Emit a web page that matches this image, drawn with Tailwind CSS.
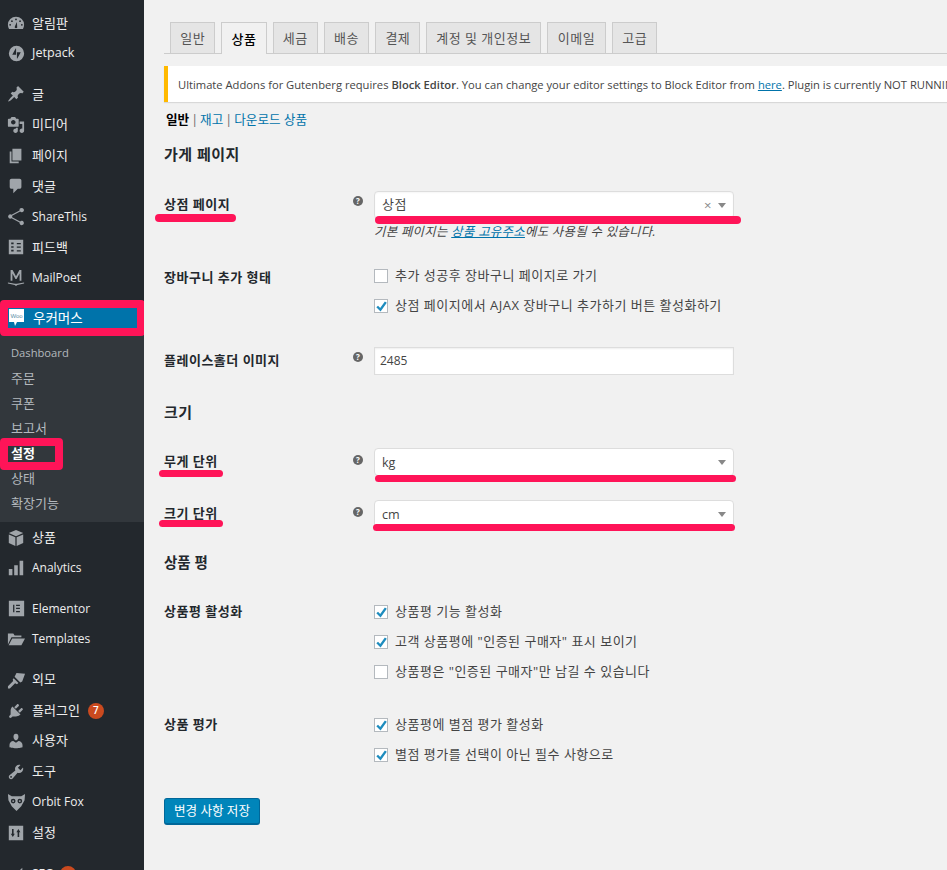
<!DOCTYPE html>
<html lang="ko">

<head>
    <meta charset="UTF-8">
    <title>설정 - 상품</title>
    <script src="https://cdn.jsdelivr.net/npm/@tailwindcss/browser@4"></script>
</head>

<body class="bg-[#f1f1f1] h-[870px] w-[947px] overflow-hidden flex text-[13px] text-[#444] font-['Open_Sans','Noto_Sans_CJK_KR',sans-serif]">

    <!-- sidebar -->
    <aside class="w-[144px] h-[870px] shrink-0 bg-[#23282d] pt-[8px] text-[#eee] overflow-hidden">
        <a class="flex items-center h-[30.6px]"><span class="w-[32px] flex justify-center"><svg class="w-[18px] h-[18px] fill-[#a0a5aa]" viewBox="0 0 20 20"><path d="M10 3a9 9 0 0 0-9 9c0 1.700.5 3.300 1.300 4.600h15.400A9 9 0 0 0 19 12a9 9 0 0 0-9-9zM10 5a1 1 0 1 1 0 2 1 1 0 0 1 0-2zM5.500 7a1 1 0 1 1 0 2 1 1 0 0 1 0-2zM14.500 7a1 1 0 1 1 0 2 1 1 0 0 1 0-2zM3.500 11a1 1 0 1 1 0 2 1 1 0 0 1 0-2zM16.500 11a1 1 0 1 1 0 2 1 1 0 0 1 0-2zM11 9l.3 5a1.400 1.400 0 1 1-2.600 0z"/></svg></span>알림판</a>
        <a class="flex items-center h-[30.6px] text-[12.6px]"><span class="w-[32px] flex justify-center"><svg class="w-[17px] h-[17px] fill-[#a0a5aa]" viewBox="0 0 20 20"><path fill-rule="evenodd" d="M10 1a9 9 0 1 1 0 18 9 9 0 0 1 0-18zM9.500 4H9L5 11.500h4.500zM10.500 16H11l4-7.500h-4.500z"/></svg></span>Jetpack</a>
        <div class="h-[10px]"></div>
        <a class="flex items-center h-[30.6px]"><span class="w-[32px] flex justify-center"><svg class="w-[18px] h-[18px] fill-[#a0a5aa]" viewBox="0 0 20 20"><path d="M10.440 3.020l1.820-1.820 6.360 6.350-1.830 1.820c-1.050-.68-2.480-.57-3.410.36l-.75.75c-.92.93-1.040 2.350-.35 3.410l-1.830 1.820-2.410-2.410-2.800 2.790c-.42.42-3.380 2.710-3.800 2.290s1.860-3.390 2.280-3.810l2.790-2.790L4.100 9.360l1.830-1.820c1.050.69 2.480.57 3.400-.36l.75-.75c.93-.92 1.050-2.350.36-3.410z"/></svg></span>글</a>
        <a class="flex items-center h-[30.6px]"><span class="w-[32px] flex justify-center"><svg class="w-[18px] h-[18px] fill-[#a0a5aa]" viewBox="0 0 20 20"><path d="M13 11V4c0-.55-.45-1-1-1h-1.670L9 1H5L3.670 3H2c-.55 0-1 .45-1 1v7c0 .55.45 1 1 1h10c.55 0 1-.45 1-1zM7 4.500c1.380 0 2.500 1.120 2.500 2.500S8.380 9.500 7 9.500 4.500 8.380 4.500 7 5.620 4.500 7 4.500zM14 6h5v10.500c0 1.380-1.120 2.500-2.500 2.500S14 17.880 14 16.500s1.120-2.500 2.500-2.500c.17 0 .34.020.5.050V9h-3V6zm-4 8.050V13h2v3.500c0 1.380-1.120 2.500-2.500 2.500S7 17.880 7 16.500 8.120 14 9.500 14c.17 0 .34.020.5.050z"/></svg></span>미디어</a>
        <a class="flex items-center h-[30.6px]"><span class="w-[32px] flex justify-center"><svg class="w-[18px] h-[18px] fill-[#a0a5aa]" viewBox="0 0 20 20"><path d="M6 15V2h10v13H6zm-1 1h8v2H3V5h2v11z"/></svg></span>페이지</a>
        <a class="flex items-center h-[30.6px]"><span class="w-[32px] flex justify-center"><svg class="w-[18px] h-[18px] fill-[#a0a5aa]" viewBox="0 0 20 20"><path d="M5 2h9c1.100 0 2 .9 2 2v7c0 1.100-.9 2-2 2h-2l-5 5v-5H5c-1.100 0-2-.9-2-2V4c0-1.100.9-2 2-2z"/></svg></span>댓글</a>
        <a class="flex items-center h-[30.6px] text-[12px]"><span class="w-[32px] flex justify-center"><svg class="w-[19px] h-[19px] fill-[#a0a5aa]" viewBox="0 0 20 20"><path d="M15.500 1a2.300 2.300 0 1 1-1.700 3.800L5.400 9.300a2.300 2.300 0 0 1 0 1.400l8.400 4.500a2.300 2.300 0 1 1-.6 1.200l-8.400-4.500a2.300 2.300 0 1 1 0-3.800l8.400-4.500A2.300 2.300 0 0 1 15.500 1z"/></svg></span>ShareThis</a>
        <a class="flex items-center h-[30.6px]"><span class="w-[32px] flex justify-center"><svg class="w-[16px] h-[16px] fill-[#a0a5aa]" viewBox="0 0 20 20"><path fill-rule="evenodd" d="M1 1h18v18H1zM4 4.500v2h3v-2zM11 5v1.500h5V5zM4 9v2h3V9zM11 9.500V11h5V9.500zM4 13.500v2h3v-2zM11 14v1.500h5V14z"/></svg></span>피드백</a>
        <a class="flex items-center h-[30.6px] text-[12px]"><span class="w-[32px] flex justify-center"><svg class="w-[18px] h-[18px] fill-[#a0a5aa]" viewBox="0 0 20 20"><path d="M4 1h2.200L10 8l3.800-7H16v12h-2V5l-3.400 6H9.400L6 5v8H4zM1 15l8 1.400c.7.100 1.300.100 2 0l8-1.400v1l-7.500 1.800L10 19l-1.500-1.200L1 16z"/></svg></span>MailPoet</a>
        <div class="h-[10px]"></div>

        <!-- woocommerce, boxed in pink -->
        <div class="border-[8px] border-[#ff1458] rounded-[4px] w-[145px] h-[36px] bg-[#0073aa] text-white flex items-center text-[13.5px] leading-none relative -mt-[3px] -mb-[1px]">
            <svg class="absolute left-[0px] top-[0px] w-[17px] h-[20px]" viewBox="0 0 17 20"><path d="M1 1h15v13H9l-2 4-1-4H1z" fill="#fff"/><text x="8.500" y="10" text-anchor="middle" font-size="6" fill="#5b8fa8" font-family="Liberation Sans">Woo</text></svg>
            <span class="ml-[25px]">우커머스</span>
        </div>
        <div class="bg-[#32373c] h-[187px] pt-[6px] text-[#b4b9be] text-[13px]">
            <a class="flex items-center h-[25px] pl-[11px] text-[11.2px]">Dashboard</a>
            <a class="flex items-center h-[25px] pl-[11px]">주문</a>
            <a class="flex items-center h-[25px] pl-[11px]">쿠폰</a>
            <a class="flex items-center h-[25px] pl-[11px]">보고서</a>
            <a class="flex items-center h-[25px] pl-[11px] relative text-white font-bold z-10"><span class="absolute left-0 top-[-3px] w-[63px] h-[32px] border-[8px] border-[#ff1458] rounded-[4px] -z-10"></span>설정</a>
            <a class="flex items-center h-[25px] pl-[11px]">상태</a>
            <a class="flex items-center h-[25px] pl-[11px]">확장기능</a>
        </div>

        <a class="flex items-center h-[30.6px]"><span class="w-[32px] flex justify-center"><svg class="w-[18px] h-[18px] fill-[#a0a5aa]" viewBox="0 0 20 20"><path d="M10 1l8 3.500-8 3.500-8-3.500zM2 6l7.300 3.200V19L2 15.500zM18 6v9.500L10.700 19V9.200z"/></svg></span>상품</a>
        <a class="flex items-center h-[30.6px] text-[12px]"><span class="w-[32px] flex justify-center"><svg class="w-[18px] h-[18px] fill-[#a0a5aa]" viewBox="0 0 20 20"><path d="M2 11h4v7H2zM8 7h4v11H8zM14 2h4v16h-4z"/></svg></span>Analytics</a>
        <div class="h-[10px]"></div>
        <a class="flex items-center h-[30.6px] text-[12px]"><span class="w-[32px] flex justify-center"><svg class="w-[17px] h-[17px] fill-[#a0a5aa]" viewBox="0 0 20 20"><path fill-rule="evenodd" d="M1 1h18v18H1zM6 5.500v9h1.500v-9zM9.500 5.500V7H14V5.500zM9.500 9.200v1.500H14V9.200zM9.500 13v1.500H14V13z"/></svg></span>Elementor</a>
        <a class="flex items-center h-[30.6px] text-[12px]"><span class="w-[32px] flex justify-center"><svg class="w-[18px] h-[18px] fill-[#a0a5aa]" viewBox="0 0 20 20"><path d="M1 4h6l1.500 2H16v2H5L1 16zM5.800 9.500H20L16 17H1.800z"/></svg></span>Templates</a>
        <div class="h-[10px]"></div>
        <a class="flex items-center h-[30.6px]"><span class="w-[32px] flex justify-center"><svg class="w-[19px] h-[19px] fill-[#a0a5aa]" viewBox="0 0 20 20"><path d="M10 2l9 1-3 8-2 1-6-6zM7 7.500l5 5-1.500 1.500-2-1-5.500 5.500H1v-2.500L6.500 10.500 6 9z"/></svg></span>외모</a>
        <a class="flex items-center h-[30.6px]"><span class="w-[32px] flex justify-center"><svg class="w-[18px] h-[18px] fill-[#a0a5aa]" viewBox="0 0 20 20"><path d="M13.110 4.360L9.870 7.600 8 5.730l3.240-3.240c.35-.34 1.050-.2 1.560.32.52.51.66 1.210.31 1.550zm-8 1.770l.91-1.120 9.010 9.010-1.190.84c-.71.71-2.630 1.160-3.820 1.160H6.140L4.900 17.260c-.59.59-1.540.59-2.120 0-.59-.58-.59-1.530 0-2.120l1.240-1.240v-3.880c0-1.130.4-3.190 1.090-3.890zm7.260 3.970l3.240-3.240c.34-.35 1.040-.21 1.550.31.52.51.66 1.210.31 1.550l-3.240 3.250z"/></svg></span><span>플러그인</span><span class="ml-[8px] w-[16px] h-[16px] rounded-full bg-[#ca4a1f] text-white text-[10px] font-semibold flex items-center justify-center">7</span></a>
        <a class="flex items-center h-[30.6px]"><span class="w-[32px] flex justify-center"><svg class="w-[18px] h-[18px] fill-[#a0a5aa]" viewBox="0 0 20 20"><path d="M10 9.250c-2.270 0-2.730-3.440-2.730-3.440C7 4.020 7.820 2 9.970 2c2.160 0 2.980 2.020 2.710 3.810 0 0-.41 3.440-2.680 3.440zm0 2.570L12.720 10c2.390 0 4.520 2.330 4.520 4.530v2.490s-3.650 1.130-7.240 1.130c-3.650 0-7.240-1.130-7.240-1.130v-2.490c0-2.250 1.940-4.480 4.150-4.480z"/></svg></span>사용자</a>
        <a class="flex items-center h-[30.6px]"><span class="w-[32px] flex justify-center"><svg class="w-[18px] h-[18px] fill-[#a0a5aa]" viewBox="0 0 20 20"><path d="M16.680 9.770c-1.340 1.340-3.300 1.670-4.950.99l-5.410 6.520c-.99.99-2.590.99-3.580 0s-.99-2.590 0-3.570l6.520-5.420c-.68-1.650-.35-3.610.99-4.950 1.280-1.280 3.120-1.620 4.720-1.060l-2.890 2.890 2.820 2.820 2.860-2.870c.53 1.580.18 3.400-1.080 4.670zM3.810 16.210c.4.39 1.030.39 1.420 0 .4-.4.4-1.030 0-1.430-.39-.39-1.020-.39-1.420 0-.39.4-.39 1.030 0 1.430z"/></svg></span>도구</a>
        <a class="flex items-center h-[30.6px] text-[12px]"><span class="w-[32px] flex justify-center"><svg class="w-[19px] h-[19px] fill-[#a0a5aa]" viewBox="0 0 20 20"><path fill-rule="evenodd" d="M1 1l4 2.500h10L19 1l-.5 6.500L15 14l-5 5-5-5-3.500-6.500zM6.500 6a2.500 2.500 0 1 0 0 5 2.500 2.500 0 0 0 0-5zM13.500 6a2.500 2.500 0 1 0 0 5 2.500 2.500 0 0 0 0-5zM6.500 7.500a1 1 0 1 1 0 2 1 1 0 0 1 0-2zM13.500 7.500a1 1 0 1 1 0 2 1 1 0 0 1 0-2z"/></svg></span>Orbit Fox</a>
        <a class="flex items-center h-[30.6px]"><span class="w-[32px] flex justify-center"><svg class="w-[16px] h-[16px] fill-[#a0a5aa]" viewBox="0 0 20 20"><path fill-rule="evenodd" d="M1 1h18v18H1zM5 5v6H3.500L6 15l2.500-4H7V5zM14 15V9h1.500L13 5l-2.500 4H12v6z"/></svg></span>설정</a>
        <div class="h-[10px]"></div>
        <a class="flex items-center h-[30.6px] text-[12px]"><span class="w-[32px] flex justify-center"><svg class="w-[18px] h-[18px] fill-[#a0a5aa]" viewBox="0 0 20 20"><path d="M2 6h9v10H2zM12 8l5-5v10z"/></svg></span><span>SEO</span><span class="ml-[5px] w-[16px] h-[16px] rounded-full bg-[#ca4a1f]"></span></a>
    </aside>

    <!-- main content -->
    <main class="flex-1 min-w-0 pl-[20px] pt-[22px] tracking-[0.5px]">
        <div class="flex gap-[6px] pl-[6px] h-[32px] border-b border-[#ccc] whitespace-nowrap">
            <a class="w-[45.3px] h-[31px] pt-[2px] flex items-center justify-center bg-[#e5e5e5] border border-[#ccc] border-b-0 text-[#555]">일반</a>
            <a class="w-[45.3px] h-[32px] pt-[2px] flex items-center justify-center bg-[#f1f1f1] border border-[#ccc] border-b-0 text-black font-medium">상품</a>
            <a class="w-[45.3px] h-[31px] pt-[2px] flex items-center justify-center bg-[#e5e5e5] border border-[#ccc] border-b-0 text-[#555]">세금</a>
            <a class="w-[45.3px] h-[31px] pt-[2px] flex items-center justify-center bg-[#e5e5e5] border border-[#ccc] border-b-0 text-[#555]">배송</a>
            <a class="w-[45.3px] h-[31px] pt-[2px] flex items-center justify-center bg-[#e5e5e5] border border-[#ccc] border-b-0 text-[#555]">결제</a>
            <a class="w-[114.5px] h-[31px] pt-[2px] flex items-center justify-center bg-[#e5e5e5] border border-[#ccc] border-b-0 text-[#555]">계정 및 개인정보</a>
            <a class="w-[59px] h-[31px] pt-[2px] flex items-center justify-center bg-[#e5e5e5] border border-[#ccc] border-b-0 text-[#555]">이메일</a>
            <a class="w-[45.3px] h-[31px] pt-[2px] flex items-center justify-center bg-[#e5e5e5] border border-[#ccc] border-b-0 text-[#555]">고급</a>
        </div>

        <div class="mt-[12px] h-[36px] bg-white border-l-[4px] border-[#ffb900] shadow-[0_1px_1px_rgba(0,0,0,0.1)] flex items-center pl-[10px] pt-[2px] whitespace-nowrap overflow-hidden text-[11.2px] tracking-normal">
            <p>Ultimate Addons for Gutenberg requires <b class="font-semibold">Block Editor</b>. You can change your editor settings to Block Editor from <a class="underline text-[#0073aa]">here</a>. Plugin is currently NOT RUNNING.</p>
        </div>

        <div class="mt-[9px] h-[18px] flex items-center text-[#666] pl-[2px] text-[12.6px] tracking-normal"><b class="font-semibold text-black">일반</b><span class="mx-[2px]">|</span><a class="text-[#0073aa]">재고</a><span class="mx-[2px]">|</span><a class="text-[#0073aa]">다운로드 상품</a></div>

        <h2 class="mt-[15px] h-[20px] flex items-center text-[15px] font-semibold text-[#23282d]">가게 페이지</h2>

        <div class="mt-[27px] flex">
            <div class="w-[189px] pt-[4px] font-semibold text-[#23282d] relative">상점 페이지<span class="absolute left-[-9px] top-[23px] w-[81px] h-[8px] rounded-full bg-[#ff1458]"></span></div>
            <div class="w-[21px] pt-[5px]"><span class="block w-[10px] h-[10px] rounded-full bg-[#666] text-white text-[8px] leading-[10px] font-bold text-center tracking-normal">?</span></div>
            <div class="w-[360px]">
                <div class="relative h-[28px] bg-white border border-[#ddd] rounded-[4px] flex items-center pl-[7px] pr-[7px] shadow-[inset_0_1px_2px_rgba(0,0,0,0.04)]">
                    <span>상점</span><span class="ml-auto text-[#888] text-[13px] leading-none">×</span><span class="ml-[6px] w-0 h-0 border-x-[4px] border-x-transparent border-t-[5px] border-t-[#888]"></span>
                    <span class="absolute left-0 top-[24px] w-[366px] h-[8px] rounded-full bg-[#ff1458]"></span>
                </div>
                <p class="mt-[4px] h-[18px] flex items-center italic text-[#444] text-[12.4px] tracking-[0.3px]">기본 페이지는&nbsp;<a class="underline text-[#0073aa]">상품 고유주소</a>에도 사용될 수 있습니다.</p>
            </div>
        </div>

        <div class="mt-[25px] flex">
            <div class="w-[210px] pt-[2px] font-semibold text-[#23282d]">장바구니 추가 형태</div>
            <div class="flex flex-col gap-[10px]">
                <label class="flex items-center gap-[7px] h-[20px]"><span class="w-[14px] h-[14px] bg-white border border-[#b4b9be]"></span>추가 성공후 장바구니 페이지로 가기</label>
                <label class="flex items-center gap-[7px] h-[20px]"><span class="w-[14px] h-[14px] bg-white border border-[#b4b9be] flex items-center justify-center"><svg class="w-[13px] h-[13px] shrink-0" viewBox="0 0 12 12"><path d="M2 6l3 3 5-7" fill="none" stroke="#1e8cbe" stroke-width="2.200"/></svg></span>상점 페이지에서 AJAX 장바구니 추가하기 버튼 활성화하기</label>
            </div>
        </div>

        <div class="mt-[31px] flex">
            <div class="w-[189px] pt-[4px] font-semibold text-[#23282d]">플레이스홀더 이미지</div>
            <div class="w-[21px] pt-[5px]"><span class="block w-[10px] h-[10px] rounded-full bg-[#666] text-white text-[8px] leading-[10px] font-bold text-center tracking-normal">?</span></div>
            <div class="w-[360px] h-[28px] bg-white border border-[#ddd] flex items-center pl-[5px] text-[12px] tracking-normal shadow-[inset_0_1px_2px_rgba(0,0,0,0.07)]">2485</div>
        </div>

        <h2 class="mt-[27px] h-[20px] flex items-center text-[15px] font-semibold text-[#23282d]">크기</h2>

        <div class="mt-[26px] flex">
            <div class="w-[189px] pt-[4px] font-semibold text-[#23282d] relative">무게 단위<span class="absolute left-[-5px] top-[22px] w-[64px] h-[7px] rounded-full bg-[#ff1458]"></span></div>
            <div class="w-[21px] pt-[7px]"><span class="block w-[10px] h-[10px] rounded-full bg-[#666] text-white text-[8px] leading-[10px] font-bold text-center tracking-normal">?</span></div>
            <div class="relative w-[360px] h-[28px] bg-white border border-[#ddd] rounded-[4px] flex items-center pl-[7px] pr-[7px] text-[12.6px] tracking-normal">
                <span class="pt-[3px]">kg</span><span class="ml-auto w-0 h-0 border-x-[4px] border-x-transparent border-t-[5px] border-t-[#888]"></span>
                <span class="absolute left-0 top-[26px] w-[361px] h-[7px] rounded-full bg-[#ff1458]"></span>
            </div>
        </div>

        <div class="mt-[24px] flex">
            <div class="w-[189px] pt-[4px] font-semibold text-[#23282d] relative">크기 단위<span class="absolute left-[-5px] top-[20px] w-[64px] h-[7px] rounded-full bg-[#ff1458]"></span></div>
            <div class="w-[21px] pt-[7px]"><span class="block w-[10px] h-[10px] rounded-full bg-[#666] text-white text-[8px] leading-[10px] font-bold text-center tracking-normal">?</span></div>
            <div class="relative w-[360px] h-[28px] bg-white border border-[#ddd] rounded-[4px] flex items-center pl-[7px] pr-[7px] text-[12.6px] tracking-normal">
                <span class="pt-[3px]">cm</span><span class="ml-auto w-0 h-0 border-x-[4px] border-x-transparent border-t-[5px] border-t-[#888]"></span>
                <span class="absolute left-[-2px] top-[23px] w-[362px] h-[7px] rounded-full bg-[#ff1458]"></span>
            </div>
        </div>

        <h2 class="mt-[25px] h-[20px] flex items-center text-[14.5px] font-semibold text-[#23282d] tracking-normal">상품 평</h2>

        <div class="mt-[29px] flex">
            <div class="w-[210px] font-semibold text-[#23282d] h-[20px] flex items-center">상품평 활성화</div>
            <div class="flex flex-col gap-[10px]">
                <label class="flex items-center gap-[7px] h-[20px]"><span class="w-[14px] h-[14px] bg-white border border-[#b4b9be] flex items-center justify-center"><svg class="w-[13px] h-[13px] shrink-0" viewBox="0 0 12 12"><path d="M2 6l3 3 5-7" fill="none" stroke="#1e8cbe" stroke-width="2.200"/></svg></span>상품평 기능 활성화</label>
                <label class="flex items-center gap-[7px] h-[20px]"><span class="w-[14px] h-[14px] bg-white border border-[#b4b9be] flex items-center justify-center"><svg class="w-[13px] h-[13px] shrink-0" viewBox="0 0 12 12"><path d="M2 6l3 3 5-7" fill="none" stroke="#1e8cbe" stroke-width="2.200"/></svg></span>고객 상품평에 "인증된 구매자" 표시 보이기</label>
                <label class="flex items-center gap-[7px] h-[20px]"><span class="w-[14px] h-[14px] bg-white border border-[#b4b9be]"></span>상품평은 "인증된 구매자"만 남길 수 있습니다</label>
            </div>
        </div>

        <div class="mt-[33px] flex">
            <div class="w-[210px] font-semibold text-[#23282d] h-[20px] flex items-center">상품 평가</div>
            <div class="flex flex-col gap-[10px]">
                <label class="flex items-center gap-[7px] h-[20px]"><span class="w-[14px] h-[14px] bg-white border border-[#b4b9be] flex items-center justify-center"><svg class="w-[13px] h-[13px] shrink-0" viewBox="0 0 12 12"><path d="M2 6l3 3 5-7" fill="none" stroke="#1e8cbe" stroke-width="2.200"/></svg></span>상품평에 별점 평가 활성화</label>
                <label class="flex items-center gap-[7px] h-[20px]"><span class="w-[14px] h-[14px] bg-white border border-[#b4b9be] flex items-center justify-center"><svg class="w-[13px] h-[13px] shrink-0" viewBox="0 0 12 12"><path d="M2 6l3 3 5-7" fill="none" stroke="#1e8cbe" stroke-width="2.200"/></svg></span>별점 평가를 선택이 아닌 필수 사항으로</label>
            </div>
        </div>

        <button class="mt-[33px] w-[96px] h-[27px] bg-[#0085ba] border border-[#006799] border-b-2 rounded-[3px] text-white text-[12.6px] tracking-normal">변경 사항 저장</button>
    </main>
</body>

</html>
